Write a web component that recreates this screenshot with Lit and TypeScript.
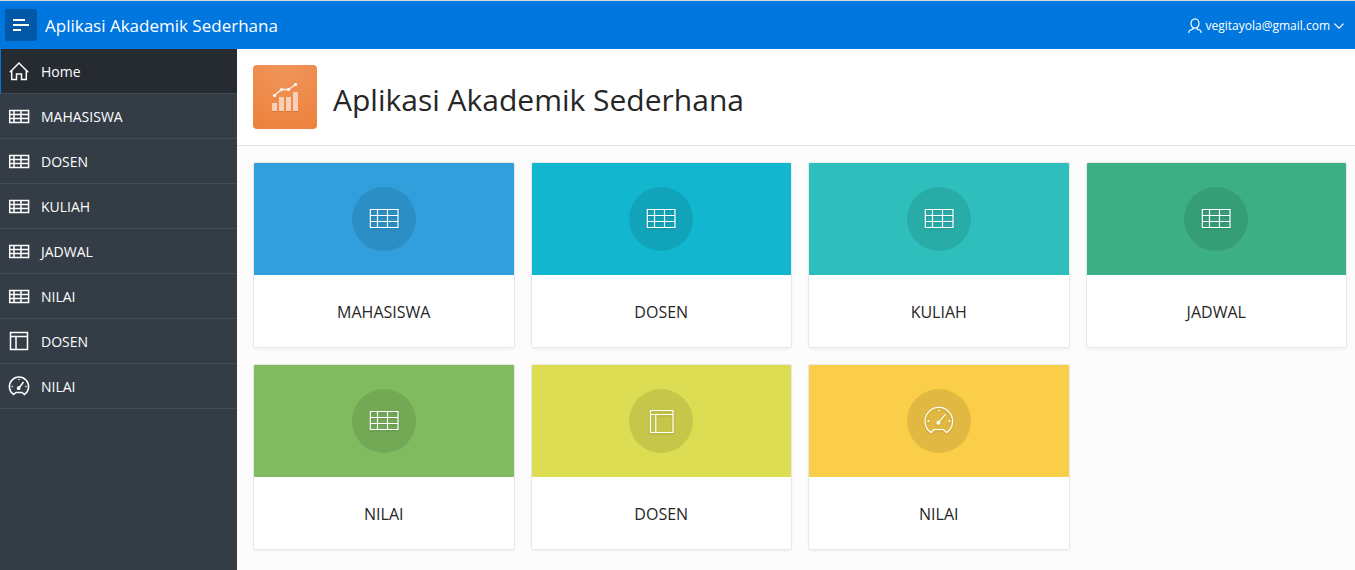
import { LitElement, html, svg, css } from "lit";
import { customElement, property } from "lit/decorators.js";

type IconName = "table" | "layout" | "gauge" | "home";

interface Entry {
  label: string;
  icon: IconName;
  tone?: string;
}

const entries: Entry[] = [
  { label: "MAHASISWA", icon: "table", tone: "blue" },
  { label: "DOSEN", icon: "table", tone: "cyan" },
  { label: "KULIAH", icon: "table", tone: "teal" },
  { label: "JADWAL", icon: "table", tone: "green" },
  { label: "NILAI", icon: "table", tone: "lime" },
  { label: "DOSEN", icon: "layout", tone: "yellow" },
  { label: "NILAI", icon: "gauge", tone: "amber" },
];

// Small glyphs use a 20px grid, large ones a 32px grid, so strokes stay crisp at both sizes.
const small = {
  home: svg`<path d="M.8 11.2 10 2l9.2 9.2M2.7 9.8v8.7h4.8V13h5v5.5h4.8V9.8"/>`,
  table: svg`<path d="M.7 4.5h18.9v12H.7zM.7 8.5h18.9M.7 12.5h18.9M5 4.5v12M12 4.5v12"/>`,
  layout: svg`<path d="M1.5 1.5h17v17h-17zM1.5 5.5h17M7 5.5v13"/>`,
  gauge: svg`<path d="M4.5 18.5A9.6 9.6 0 1 1 15.5 18.5L13 16.5H7z"/><path d="M10 12l4.5-6M10 3v.9M2.6 10.5h1.2M16.3 10.5h1.2"/><circle cx="9.6" cy="12.2" r="1.1" fill="currentColor"/>`,
};
const large = {
  home: small.home,
  table: svg`<path d="M2.3 6.5h27.7v18H2.3zM2.3 12.5h27.7M2.3 18.5h27.7M9.5 6.5v18M19.5 6.5v18"/>`,
  layout: svg`<path d="M5.5 5.5h22.5v22H5.5zM5.5 9.5h22.5M10.8 9.5v18"/>`,
  gauge: svg`<path d="M8 27.6A13.8 13.8 0 1 1 23.6 27.6L20.5 24.5H11z"/><path d="M15.4 17.7l7-8.3M15 5.5h2"/><g fill="currentColor" stroke="none"><circle cx="15.4" cy="17.7" r="2"/><circle cx="5.4" cy="16" r="1"/><circle cx="26.4" cy="16" r="1"/></g>`,
};

@customElement("app-icon")
class AppIcon extends LitElement {
  @property() name: IconName = "table";
  @property({ type: Boolean, reflect: true }) large = false;

  static styles = css`
    :host { display: block; width: 20px; height: 20px; flex: none; }
    :host([large]) { width: 32px; height: 32px; }
    svg { display: block; width: 100%; height: 100%; fill: none; stroke: currentColor; stroke-width: 1.5; overflow: visible; }
    :host([large]) svg { stroke-width: 1.2; filter: drop-shadow(0 1px 1px rgba(0, 0, 0, 0.15)); }
  `;

  render() {
    return this.large
      ? html`<svg viewBox="0 0 32 32" aria-hidden="true">${large[this.name]}</svg>`
      : html`<svg viewBox="0 0 20 20" aria-hidden="true">${small[this.name]}</svg>`;
  }
}

@customElement("app-root")
class AppRoot extends LitElement {
  static styles = css`
    :host {
      display: flex;
      flex-direction: column;
      min-height: 100vh;
      box-sizing: border-box;
      border-top: 1px solid #d5dbe0;
      background: #fcfcfc;
      color: #262626;
      font-family: "Segoe UI", "Open Sans", "Noto Sans", sans-serif;
      font-size: 14px;
      line-height: 20px;
    }
    * { box-sizing: border-box; }
    a { color: inherit; text-decoration: none; }
    button { border: 0; padding: 0; background: none; color: inherit; font: inherit; cursor: pointer; }
    .bar {
      display: flex;
      align-items: center;
      gap: 8px;
      height: 48px;
      padding: 0 11px 0 5px;
      background: #0076df;
      color: #fff;
    }
    .toggle {
      display: grid;
      place-items: center;
      width: 32px;
      height: 32px;
      border-radius: 2px;
      background: #0058a7;
    }
    .brand { padding-top: 2px; font-size: 17px; line-height: 24px; margin-right: auto; }
    .user { display: flex; align-items: center; gap: 4px; padding-top: 1px; font-size: 12px; }
    .body { display: flex; flex: 1; }
    .side { flex: none; width: 237px; background: #343d46; color: #fff; }
    .side ul { list-style: none; margin: 0; padding: 0; }
    .side li { border-bottom: 1px solid #434c55; }
    .side a { display: flex; align-items: center; gap: 12px; height: 44px; padding: 0 9px; }
    .side a span { padding-top: 2px; }
    .side a[aria-current] { background: #252b31; box-shadow: inset 1px 0 #0076df; }
    main { flex: 1; min-width: 0; }
    .hero {
      display: flex;
      align-items: center;
      gap: 16px;
      padding: 16px;
      background: #fff;
      border-bottom: 1px solid #e3e3e3;
    }
    .logo {
      display: grid;
      place-items: center;
      width: 64px;
      height: 64px;
      border-radius: 4px;
      background: radial-gradient(circle at 50% 0, #f0955c, #ed813b);
    }
    h1 { margin: 0; padding-top: 6px; font-size: 30px; line-height: 40px; font-weight: 400; }
    .cards {
      display: grid;
      grid-template-columns: repeat(4, minmax(0, 1fr));
      gap: 16px;
      padding: 16px 8px 20px 16px;
    }
    .card {
      display: block;
      border: 1px solid #e8e8e8;
      border-radius: 2px;
      background: #fff;
      box-shadow: 0 2px 4px -2px rgba(0, 0, 0, 0.1);
      overflow: hidden;
    }
    .band { display: grid; place-items: center; padding: 24px; color: #fff; }
    .disc {
      display: grid;
      place-items: center;
      width: 64px;
      height: 64px;
      border-radius: 50%;
      background: rgba(0, 0, 0, 0.1);
    }
    .name { display: block; padding: 25px 16px 23px; font-size: 16px; line-height: 24px; text-align: center; }
    .blue { background: #309fdb; }
    .cyan { background: #13b6cf; }
    .teal { background: #2ebfbc; }
    .green { background: #3caf85; }
    .lime { background: #81bb5f; }
    .yellow { background: #dddd53; }
    .amber { background: #fbce4a; }
  `;

  render() {
    return html`
      <header class="bar">
        <button class="toggle" aria-label="Menu">
          <svg width="16" height="14" viewBox="0 0 16 14" fill="none" stroke="#fff" stroke-width="2" aria-hidden="true">
            <path d="M0 2h12M0 7h16M0 12h8" />
          </svg>
        </button>
        <a class="brand" href="#">Aplikasi Akademik Sederhana</a>
        <button class="user">
          <svg width="14" height="16" viewBox="0 0 14 16" fill="none" stroke="#fff" stroke-width="1.2" aria-hidden="true">
            <ellipse cx="7" cy="5.5" rx="4" ry="4.7" />
            <path d="M5 10v1L2 12.3Q.8 13 .8 15M9 10v1l3 1.3q1.2.7 1.2 2.7" />
          </svg>
          <span>vegitayola@gmail.com</span>
          <svg width="10" height="6" viewBox="0 0 10 6" fill="none" stroke="#fff" stroke-width="1.2" aria-hidden="true">
            <path d="M.5.7 5 5.2 9.5.7" />
          </svg>
        </button>
      </header>
      <div class="body">
        <nav class="side">
          <ul>
            <li><a href="#" aria-current="page"><app-icon name="home"></app-icon><span>Home</span></a></li>
            ${entries.map((e) => html`<li><a href="#"><app-icon name=${e.icon}></app-icon><span>${e.label}</span></a></li>`)}
          </ul>
        </nav>
        <main>
          <div class="hero">
            <span class="logo">
              <svg width="28" height="32" viewBox="0 0 28 32" aria-hidden="true">
                <path d="M1 30.5h5M8 30.5h5M15 30.5h5M22 30.5h5" stroke="#c76d32" stroke-opacity=".6" />
                <path d="M1 22h5v8H1zM8 16h5v14H8zM15 16h5v14h-5zM22 11h5v19h-5z" fill="#fff" fill-opacity=".6" />
                <path d="M3.5 14.5l7-6h7l7-5" fill="none" stroke="#fff" stroke-opacity=".85" stroke-width="1.4" />
                <g fill="#fff">
                  <circle cx="3.5" cy="14.5" r="1.6" /><circle cx="10.5" cy="8.5" r="1.6" />
                  <circle cx="17.5" cy="8.5" r="1.6" /><circle cx="24.5" cy="3.5" r="1.6" />
                </g>
              </svg>
            </span>
            <h1>Aplikasi Akademik Sederhana</h1>
          </div>
          <div class="cards">
            ${entries.map(
              (e) => html`
                <a class="card" href="#">
                  <span class="band ${e.tone}"><span class="disc"><app-icon large name=${e.icon}></app-icon></span></span>
                  <span class="name">${e.label}</span>
                </a>
              `
            )}
          </div>
        </main>
      </div>
    `;
  }
}
